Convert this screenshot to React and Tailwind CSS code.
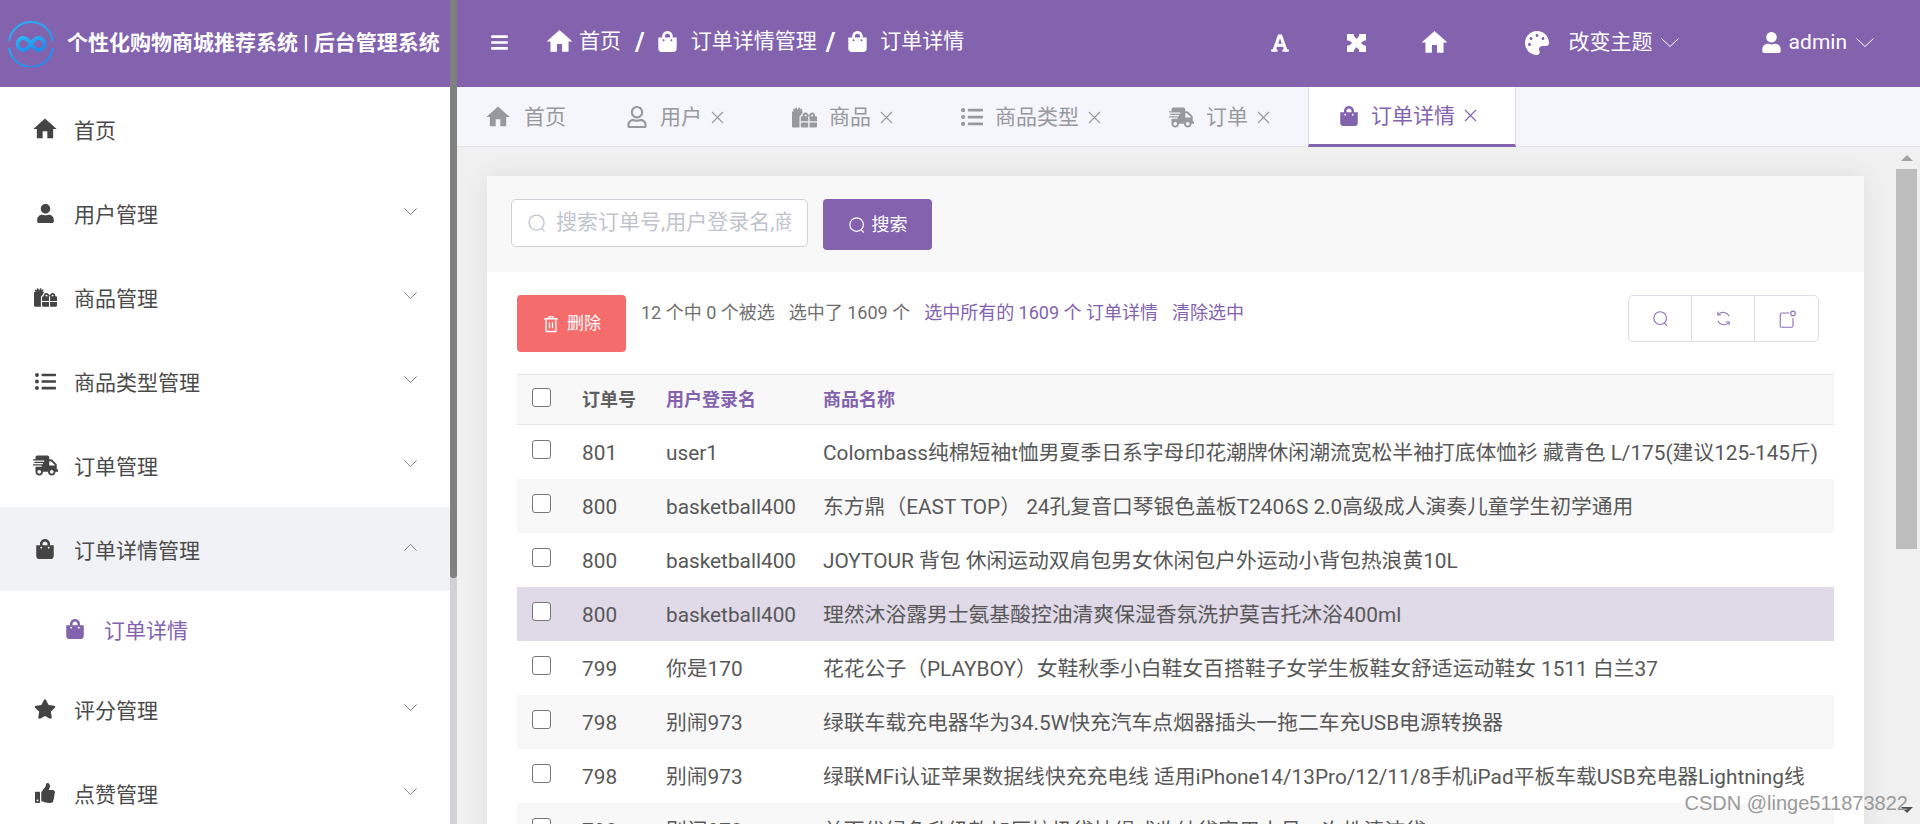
import React from "react";
import {
  FaBars,
  FaFont,
  FaGifts,
  FaListUl,
  FaPalette,
  FaRegUser,
  FaShippingFast,
  FaShoppingBag,
  FaStar,
  FaThumbsUp,
  FaUser,
} from "react-icons/fa";
import { MdHome } from "react-icons/md";

const FONT = "font-['Roboto','Noto_Sans_CJK_SC',sans-serif]";

const MENU = [
  { icon: MdHome, label: "首页", size: "text-[28px]" },
  { icon: FaUser, label: "用户管理", arrow: true, size: "text-[19px]" },
  { icon: FaGifts, label: "商品管理", arrow: true, size: "text-[23px]" },
  { icon: FaListUl, label: "商品类型管理", arrow: true, size: "text-[21px]" },
  { icon: FaShippingFast, label: "订单管理", arrow: true, size: "text-[25px]" },
  { icon: FaShoppingBag, label: "订单详情管理", arrow: true, open: true, size: "text-[20px]" },
  { icon: FaStar, label: "评分管理", arrow: true, size: "text-[22px]" },
  { icon: FaThumbsUp, label: "点赞管理", arrow: true, size: "text-[20px]" },
];

const TABS = [
  { icon: MdHome, label: "首页", size: "text-[28px] -ml-[3px]" },
  { icon: FaRegUser, label: "用户", close: true, size: "text-[22px]" },
  { icon: FaGifts, label: "商品", close: true, size: "text-[25px]" },
  { icon: FaListUl, label: "商品类型", close: true, size: "text-[22px]" },
  { icon: FaShippingFast, label: "订单", close: true, size: "text-[25px]" },
  { icon: FaShoppingBag, label: "订单详情", close: true, active: true, size: "text-[20px]" },
];

const ROWS = [
  ["801", "user1", "Colombass纯棉短袖t恤男夏季日系字母印花潮牌休闲潮流宽松半袖打底体恤衫 藏青色 L/175(建议125-145斤)"],
  ["800", "basketball400", "东方鼎（EAST TOP） 24孔复音口琴银色盖板T2406S 2.0高级成人演奏儿童学生初学通用"],
  ["800", "basketball400", "JOYTOUR 背包 休闲运动双肩包男女休闲包户外运动小背包热浪黄10L"],
  ["800", "basketball400", "理然沐浴露男士氨基酸控油清爽保湿香氛洗护莫吉托沐浴400ml", "hover"],
  ["799", "你是170", "花花公子（PLAYBOY）女鞋秋季小白鞋女百搭鞋子女学生板鞋女舒适运动鞋女 1511 白兰37"],
  ["798", "别闹973", "绿联车载充电器华为34.5W快充汽车点烟器插头一拖二车充USB电源转换器"],
  ["798", "别闹973", "绿联MFi认证苹果数据线快充充电线 适用iPhone14/13Pro/12/11/8手机iPad平板车载USB充电器Lightning线"],
  ["798", "别闹973", "益而优绿色升级款加厚垃圾袋抽绳式收纳袋家用大号一次性清洁袋"],
];

function SearchIcon({ className }) {
  return (
    <svg viewBox="0 0 24 24" fill="none" stroke="currentColor" strokeWidth="1.6" className={className}>
      <circle cx="11.5" cy="11.5" r="9" />
      <path d="M17.5 18.5 21 22" />
    </svg>
  );
}

// thin element-ui style arrow, wider than the lucide one
function Chevron({ up, className }) {
  return (
    <svg viewBox="0 0 18 9" fill="none" stroke="currentColor" strokeWidth="1" preserveAspectRatio="none" className={className}>
      <path d={up ? "M.5 8.500 9 .5l8.500 8" : "M.5 .5 9 8.500 17.500 .5"} />
    </svg>
  );
}

function CloseIcon() {
  return (
    <svg viewBox="0 0 13 13" fill="none" stroke="currentColor" strokeWidth="1.1" className="ml-[9px] w-[13px] h-[13px] shrink-0">
      <path d="M1 1l11 11M12 1 1 12" />
    </svg>
  );
}

// chunky fullscreen arrows of the top bar
function ExpandIcon({ className }) {
  return (
    <svg viewBox="0 0 24 24" fill="currentColor" preserveAspectRatio="none" className={className}>
      <path d="M0 0H8.500L9 3 12 6.500 15 3 15.500 0H24V8.500L21 9 17.500 12 21 15 24 15.500V24H15.500L15 21 12 17.500 9 21 8.500 24H0V15.500L3 15 6.500 12 3 9 0 8.500Z" />
    </svg>
  );
}

function Logo() {
  return (
    <svg viewBox="0 0 46 46" className="w-[46px] h-[46px] shrink-0">
      <defs>
        <linearGradient id="logoBlue" x1="0" y1="0" x2="0.6" y2="1">
          <stop offset="0" stopColor="#2bb4f8" />
          <stop offset="1" stopColor="#1f8fee" />
        </linearGradient>
      </defs>
      <path d="M1.200 20A22 22 0 0 1 44.800 20M44.800 27A22 22 0 0 1 1.200 27" fill="none" stroke="url(#logoBlue)" strokeWidth="2" />
      <path
        d="M23 23c-3-4.500-5-6-7.500-6a6 6 0 0 0 0 12c2.500 0 4.500-1.500 7.500-6s5-6 7.500-6a6 6 0 0 1 0 12c-2.500 0-4.500-1.500-7.500-6z"
        fill="none"
        stroke="url(#logoBlue)"
        strokeWidth="3.800"
      />
    </svg>
  );
}

function Sidebar() {
  return (
    <aside className="w-[450px] shrink-0 bg-white flex flex-col">
      <div className="h-[87px] shrink-0 bg-[#8362ae] flex items-center pl-2 gap-[13px]">
        <Logo />
        <span className="text-[21px] font-bold text-white whitespace-nowrap">
          个性化购物商城推荐系统 | 后台管理系统
        </span>
      </div>
      {MENU.map((item) => {
        const Icon = item.icon;
        return (
          <React.Fragment key={item.label}>
            <div className={`h-[84px] shrink-0 flex items-center pl-[32px] pr-[33px] ${item.open ? "bg-[#f1f2f6]" : ""}`}>
              <span className="w-[26px] flex justify-center">
                <Icon className={`${item.size} text-[#444] shrink-0`} />
              </span>
              <span className="ml-[16px] text-[21px] text-[#4a4a4a] pt-[6px]">{item.label}</span>
              {item.arrow && (
                <Chevron up={item.open} className="ml-auto mb-[4px] w-[13px] h-[7px] text-[#555]" />
              )}
            </div>
            {item.open && (
              <div className="h-[76px] shrink-0 flex items-center pl-[62px] text-[#8362ae]">
                <span className="w-[26px] flex justify-center">
                  <FaShoppingBag className="text-[20px]" />
                </span>
                <span className="ml-[16px] text-[21px] pt-[6px]">订单详情</span>
              </div>
            )}
          </React.Fragment>
        );
      })}
    </aside>
  );
}

function FakeScrollbar() {
  return (
    <div className="w-[7px] shrink-0 flex flex-col bg-[#d2d2d6]">
      <div className="h-[578px] bg-[#808080] rounded-b-[3px]" />
    </div>
  );
}

function TopBar() {
  return (
    <header className="h-[87px] shrink-0 bg-[#8362ae] text-white flex items-center pb-[2px] pl-[33px]">
      <FaBars className="text-[19px]" />
      <div className="ml-[35px] flex items-center text-[21px] -mt-[2px]">
        <MdHome className="text-[31px]" />
        <span className="ml-[4px]">首页</span>
        <span className="ml-[14px] font-bold text-[26px] leading-none">/</span>
        <FaShoppingBag className="ml-[12px] text-[21px]" />
        <span className="ml-[13px]">订单详情管理</span>
        <span className="ml-[9px] font-bold text-[26px] leading-none">/</span>
        <FaShoppingBag className="ml-[12px] text-[21px]" />
        <span className="ml-[12px]">订单详情</span>
      </div>
      <div className="ml-auto flex items-center pr-[46px]">
        <FaFont className="text-[20px]" />
        <ExpandIcon className="ml-[57px] w-[19px] h-[18px]" />
        <MdHome className="ml-[53px] text-[31px]" />
        <FaPalette className="ml-[75px] text-[24px]" />
        <span className="ml-[20px] text-[21px]">改变主题</span>
        <Chevron className="ml-[8px] w-[18px] h-[9px]" />
        <FaUser className="ml-[82px] text-[21px]" />
        <span className="ml-[7px] text-[21px]">admin</span>
        <Chevron className="ml-[9px] w-[18px] h-[9px]" />
      </div>
    </header>
  );
}

function Tabs() {
  return (
    <nav className="h-[60px] shrink-0 bg-[#f5f6fb] border-b border-[#e4e4e8] flex">
      {TABS.map((tab) => {
        const Icon = tab.icon;
        return (
          <div
            key={tab.label}
            className={`h-[60px] pl-[30px] flex items-center ${tab.close ? "pr-[38px]" : "pr-[30px]"} ${
              tab.active
                ? "bg-white text-[#8362ae] border-x border-[#dcdde6] border-b-[3px] border-b-[#8362ae]"
                : "text-[#97999e]"
            }`}
          >
            <Icon className={`${tab.size} shrink-0`} />
            <span className="ml-[12px] text-[21px] whitespace-nowrap pt-[2px]">{tab.label}</span>
            {tab.close && <CloseIcon />}
          </div>
        );
      })}
    </nav>
  );
}

function ToolButton({ children, last }) {
  return (
    <div className={`w-[63px] flex items-center justify-center text-[#8f6fbb] ${last ? "" : "border-r border-[#dddbe6]"}`}>
      {children}
    </div>
  );
}

function Checkbox() {
  return <span className="block w-[19px] h-[19px] rounded-[3px] border border-[#767676] bg-white" />;
}

function OrderTable() {
  return (
    <div className="mt-[22px] mx-[30px] text-[20.800px]">
      <div className="h-[51px] flex items-center bg-[#f8f8f8] border-y border-[#e6e6e9] text-[18px] font-bold">
        <span className="w-[65px] pl-[15px] -mt-[5px]"><Checkbox /></span>
        <span className="w-[84px] text-[#5f5f5f]">订单号</span>
        <span className="w-[157px] text-[#8362ae]">用户登录名</span>
        <span className="text-[#8362ae]">商品名称</span>
      </div>
      {ROWS.map((row, i) => (
        <div
          key={i}
          className={`h-[54px] flex items-center text-[#585858] whitespace-nowrap ${
            row[3] === "hover" ? "bg-[#dfd9e8]" : i % 2 === 1 ? "bg-[#f8f8f8]" : "bg-white"
          }`}
        >
          <span className="w-[65px] pl-[15px] -mt-[5px]"><Checkbox /></span>
          <span className="w-[84px] pt-[4px]">{row[0]}</span>
          <span className="w-[157px] pt-[4px]">{row[1]}</span>
          <span className="pt-[4px]">{row[2]}</span>
        </div>
      ))}
    </div>
  );
}

function Card() {
  return (
    <section className="mt-[29px] mx-[30px] w-[1377px] bg-white shadow-[0_0_24px_rgba(0,0,0,0.08)]">
      <div className="h-[96px] bg-[#f8f8f8] flex items-start pt-[23px] pl-[24px]">
        <div className="w-[297px] h-[48px] bg-white border border-[#cfcfd6] rounded-[5px] flex items-center pl-[15px] pr-[16px] overflow-hidden">
          <SearchIcon className="w-[20px] h-[20px] text-[#c0c4cc] shrink-0" />
          <span className="ml-[9px] text-[21px] text-[#c0c4cc] whitespace-nowrap overflow-hidden">
            搜索订单号,用户登录名,商品名称
          </span>
        </div>
        <button className="ml-[15px] w-[109px] h-[51px] bg-[#8362ae] rounded-[4px] text-white flex items-center justify-center text-[18px]">
          <SearchIcon className="w-[18px] h-[18px]" />
          <span className="ml-[6px]">搜索</span>
        </button>
      </div>
      <div className="pt-[23px] px-[30px] flex items-start">
        <button className="w-[109px] h-[57px] bg-[#f56c6c] rounded-[4px] text-white flex items-center justify-center text-[17px] shrink-0">
          <svg viewBox="0 0 24 24" fill="none" stroke="currentColor" strokeWidth="1.700" className="w-[18px] h-[18px]">
            <path d="M3 5h18M9 5V2.500h6V5M5.500 5v17h13V5M10 9.500v8M14 9.500v8" />
          </svg>
          <span className="ml-[7px]">删除</span>
        </button>
        <div className="ml-[15px] text-[18px] text-[#6f6f6f] flex gap-[14px] leading-[36px] whitespace-nowrap">
          <span>12 个中 0 个被选</span>
          <span>选中了 1609 个</span>
          <span className="text-[#8362ae]">选中所有的 1609 个 订单详情</span>
          <span className="text-[#8362ae]">清除选中</span>
        </div>
        <div className="ml-auto mr-[15px] h-[47px] flex border border-[#dddbe6] rounded-[5px]">
          <ToolButton><SearchIcon className="w-[17px] h-[17px]" /></ToolButton>
          <ToolButton>
            <svg viewBox="0 0 24 24" fill="none" stroke="currentColor" strokeWidth="1.500" className="w-[17px] h-[17px]">
              <path d="M20 9A9 9 0 0 0 5.500 5.500L4 7M4 15a9 9 0 0 0 14.500 3.500L20 17" />
              <path d="M4 2.500V7h4.500M20 21.500V17h-4.500" />
            </svg>
          </ToolButton>
          <ToolButton last>
            <svg viewBox="0 0 24 24" fill="none" stroke="currentColor" strokeWidth="1.500" className="w-[18px] h-[18px]">
              <path d="M15 4H5a2 2 0 0 0-2 2v15a2 2 0 0 0 2 2h13a2 2 0 0 0 2-2v-10" />
              <circle cx="20" cy="4.500" r="3" />
            </svg>
          </ToolButton>
        </div>
      </div>
      <OrderTable />
    </section>
  );
}

function PageScrollbar() {
  return (
    <div className="w-[24px] shrink-0 flex flex-col items-center pr-[3px] bg-[#f0f0f0]">
      <span className="mt-[8px] w-0 h-0 border-x-[6px] border-x-transparent border-b-[6px] border-b-[#a3a3a3]" />
      <div className="mt-[8px] w-[21px] h-[380px] bg-[#bdbdbd]" />
      <span className="mt-auto mb-[11px] w-0 h-0 border-x-[6px] border-x-transparent border-t-[6px] border-t-[#505050]" />
    </div>
  );
}

export default function App() {
  return (
    <div className={`relative h-screen w-full overflow-hidden flex ${FONT}`}>
      <Sidebar />
      <FakeScrollbar />
      <main className="flex-1 min-w-0 flex flex-col bg-[#f0f0f0]">
        <TopBar />
        <Tabs />
        <div className="flex-1 min-h-0 flex overflow-hidden">
          <div className="flex-1 min-w-0"><Card /></div>
          <PageScrollbar />
        </div>
      </main>
      <span className="absolute right-[12px] bottom-[6px] text-[20px] text-[#9a9a9a] font-['Liberation_Sans',sans-serif] whitespace-nowrap">
        CSDN @linge511873822
      </span>
    </div>
  );
}
